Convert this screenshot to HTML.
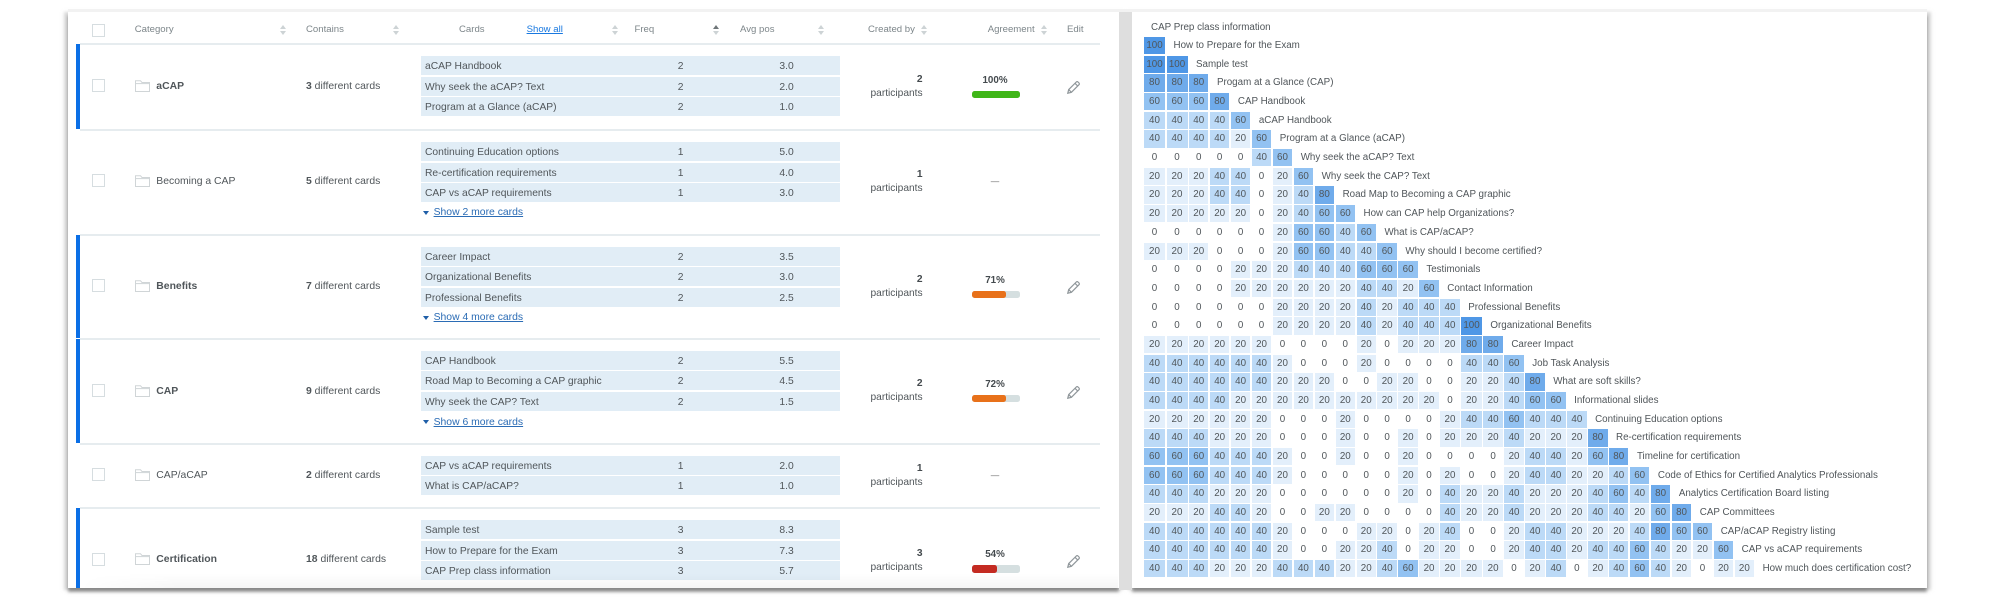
<!DOCTYPE html>
<html lang="en"><head><meta charset="utf-8"><title>Card sort results</title>
<style>
html,body{margin:0;padding:0;background:#fff}
body{width:2000px;height:600px;overflow:hidden;position:relative;font-family:"Liberation Sans",sans-serif;color:#50565a}
#w{position:absolute;left:0;top:0;width:2000px;height:600px;filter:blur(.35px)}
.p{position:absolute;top:12px;bottom:12px;background:#fff;box-shadow:0 4px 3px 0 rgba(70,70,70,.5),-3px 1px 3px 1px rgba(185,185,185,.55),3px 1px 3px 1px rgba(185,185,185,.55)}
.a{position:absolute;white-space:nowrap;line-height:16px;height:14px}
.h{font-size:9.6px;color:#7d868a;top:22px}
.cb{position:absolute;left:91.5px;width:11px;height:11px;border:1.5px solid #d6dde0;background:#fff}
.so{position:absolute;top:25px;width:6px;height:10px}
.so:before,.so:after{content:"";position:absolute;left:0;border-left:3px solid transparent;border-right:3px solid transparent}
.so:before{top:0;border-bottom:4px solid #cdd3d5}
.so:after{bottom:0;border-top:4px solid #cdd3d5}
.so.on:before{border-bottom-color:#6f7679}
.ln{position:absolute;left:80px;width:1020px;height:1.5px;background:#e6ecef}
.bl{position:absolute;left:75.5px;width:4.5px;background:#0b6fe6}
.fo{position:absolute;left:135px;width:15px;height:12px}
.nm{left:156.3px;font-size:10.4px;color:#50565a}
.ct{left:306px;font-size:10.4px}
.k{position:absolute;left:420.6px;width:419.4px;height:19px;line-height:21px;background:#e1edf6;font-size:10.3px;color:#50565a}
.k b{position:absolute;left:4.4px;font-weight:400;white-space:nowrap}
.k i{position:absolute;left:240px;width:40px;text-align:center;font-style:normal}
.k u{position:absolute;left:346px;width:40px;text-align:center;text-decoration:none}
.sh{left:433.6px;font-size:10.4px;color:#2b6cb5;text-decoration:underline}
.tr{position:absolute;left:423.2px;width:0;height:0;border-left:3px solid transparent;border-right:3px solid transparent;border-top:4px solid #1f5fa8}
.pn{left:850px;width:72.6px;text-align:right;font-size:10.2px;color:#444a4e;font-weight:700}
.pt{left:850px;width:72.6px;text-align:right;font-size:10.2px;color:#50565a}
.pc{left:965px;width:60px;text-align:center;font-size:9.8px;font-weight:700;color:#444a4e}
.ba{position:absolute;left:971.6px;width:48.2px;height:7.4px;border-radius:2.5px;background:#d5dfe0;overflow:hidden}
.ba div{height:100%;border-radius:2.5px}
.da{left:965px;width:60px;text-align:center;font-size:8.5px;color:#666}
.pe{position:absolute;left:1067px;width:13px;height:13px}
.r{position:absolute;left:1144px;height:17.4px;display:grid;grid-template-columns:21px 21px repeat(13,19.45px) 20.7px repeat(13,19.45px) 100px;column-gap:1.5px;font-size:9.8px;line-height:18.6px}
.r i{font-style:normal;text-align:center;display:block;height:17.4px;color:#50565a}
.r span{margin-left:7px;white-space:nowrap;color:#50565a;letter-spacing:0}
.b{background:#e3effb}.c{background:#bcdaf7}.d{background:#92c2f2}.e{background:#6fabeb}.f{background:#4f97e6}
</style></head>
<body>
<div id="w">
<div class="p" style="left:68px;width:1050.5px"></div>
<div class="p" style="left:1132px;width:794.7px"></div>
<div style="position:absolute;left:1118.5px;top:12px;width:13.5px;height:578px;background:#dedede"></div>
<div style="position:absolute;left:68px;top:9px;width:1859px;height:3px;background:#f2f2f2"></div>

<!-- left table header -->
<div class="cb" style="top:24px"></div>
<div class="a h" style="left:134.7px">Category</div><div class="so" style="left:280.4px"></div>
<div class="a h" style="left:306px">Contains</div><div class="so" style="left:392.5px"></div>
<div class="a h" style="left:459px">Cards</div>
<div class="a h" style="left:526.6px;color:#1878e0;text-decoration:underline">Show all</div><div class="so" style="left:611.7px"></div>
<div class="a h" style="left:634.5px">Freq</div><div class="so on" style="left:713.2px"></div>
<div class="a h" style="left:740px">Avg pos</div><div class="so" style="left:818.4px"></div>
<div class="a h" style="left:868px">Created by</div><div class="so" style="left:921.2px"></div>
<div class="a h" style="left:987.7px">Agreement</div><div class="so" style="left:1041.2px"></div>
<div class="a h" style="left:1067px">Edit</div>

<div class="ln" style="top:43px"></div>
<div class="ln" style="top:129px"></div>
<div class="ln" style="top:234px"></div>
<div class="ln" style="top:338px"></div>
<div class="ln" style="top:443px"></div>
<div class="ln" style="top:507px"></div>

<div class="bl" style="top:44px;height:85px"></div>
<div class="bl" style="top:235px;height:103px"></div>
<div class="bl" style="top:339px;height:104px"></div>
<div class="bl" style="top:508px;height:80px"></div>

<!-- row 1 -->
<div class="cb" style="top:79px"></div>
<svg class="fo" style="top:80px" viewBox="0 0 15 12" fill="none" stroke="#d0d5d7" stroke-width="1"><path d="M.5 11.5V.8h5l1.5 1.700h7.5v9z"/><path d="M.5 3.6h14"/></svg>
<div class="a nm" style="top:79px;font-weight:700">aCAP</div>
<div class="a ct" style="top:79px"><b>3</b> different cards</div>
<div class="k" style="top:56px"><b>aCAP Handbook</b><i>2</i><u>3.0</u></div>
<div class="k" style="top:76.7px"><b>Why seek the aCAP? Text</b><i>2</i><u>2.0</u></div>
<div class="k" style="top:97.4px"><b>Program at a Glance (aCAP)</b><i>2</i><u>1.0</u></div>
<div class="a pn" style="top:72px">2</div><div class="a pt" style="top:85.7px">participants</div>
<div class="a pc" style="top:73.3px">100%</div>
<div class="ba" style="top:91px"><div style="width:100%;background:#3fb618"></div></div>
<svg class="pe" style="top:81px" viewBox="0 0 13 13" fill="none" stroke="#8f969a" stroke-width="1.2"><path d="M.8 12.200l.9-3.600L9.300 1a1.200 1.200 0 0 1 1.700 0l1 1a1.200 1.200 0 0 1 0 1.700L4.400 11.300z"/><path d="M1.700 8.600l2.700 2.700M8 2.300l2.700 2.700"/></svg>

<!-- row 2 -->
<div class="cb" style="top:174px"></div>
<svg class="fo" style="top:174.5px" viewBox="0 0 15 12" fill="none" stroke="#d0d5d7" stroke-width="1"><path d="M.5 11.500V.8h5l1.500 1.700h7.500v9z"/><path d="M.5 3.600h14"/></svg>
<div class="a nm" style="top:174px">Becoming a CAP</div>
<div class="a ct" style="top:174px"><b>5</b> different cards</div>
<div class="k" style="top:142px"><b>Continuing Education options</b><i>1</i><u>5.0</u></div>
<div class="k" style="top:162.6px"><b>Re-certification requirements</b><i>1</i><u>4.0</u></div>
<div class="k" style="top:183.2px"><b>CAP vs aCAP requirements</b><i>1</i><u>3.0</u></div>
<div class="tr" style="top:211px"></div><div class="a sh" style="top:205px">Show 2 more cards</div>
<div class="a pn" style="top:167.3px">1</div><div class="a pt" style="top:181px">participants</div>
<div class="a da" style="top:173px">—</div>

<!-- row 3 -->
<div class="cb" style="top:279px"></div>
<svg class="fo" style="top:279.5px" viewBox="0 0 15 12" fill="none" stroke="#d0d5d7" stroke-width="1"><path d="M.5 11.500V.8h5l1.500 1.700h7.500v9z"/><path d="M.5 3.600h14"/></svg>
<div class="a nm" style="top:279px;font-weight:700">Benefits</div>
<div class="a ct" style="top:279px"><b>7</b> different cards</div>
<div class="k" style="top:246.5px"><b>Career Impact</b><i>2</i><u>3.5</u></div>
<div class="k" style="top:267.1px"><b>Organizational Benefits</b><i>2</i><u>3.0</u></div>
<div class="k" style="top:287.7px"><b>Professional Benefits</b><i>2</i><u>2.5</u></div>
<div class="tr" style="top:316px"></div><div class="a sh" style="top:310px">Show 4 more cards</div>
<div class="a pn" style="top:272px">2</div><div class="a pt" style="top:285.7px">participants</div>
<div class="a pc" style="top:273.3px">71%</div>
<div class="ba" style="top:291px"><div style="width:71%;background:#e8711a"></div></div>
<svg class="pe" style="top:281px" viewBox="0 0 13 13" fill="none" stroke="#8f969a" stroke-width="1.2"><path d="M.8 12.200l.9-3.600L9.300 1a1.200 1.200 0 0 1 1.700 0l1 1a1.200 1.200 0 0 1 0 1.700L4.400 11.300z"/><path d="M1.700 8.600l2.700 2.700M8 2.300l2.700 2.700"/></svg>

<!-- row 4 -->
<div class="cb" style="top:384px"></div>
<svg class="fo" style="top:384.5px" viewBox="0 0 15 12" fill="none" stroke="#d0d5d7" stroke-width="1"><path d="M.5 11.500V.8h5l1.500 1.700h7.500v9z"/><path d="M.5 3.600h14"/></svg>
<div class="a nm" style="top:384px;font-weight:700">CAP</div>
<div class="a ct" style="top:384px"><b>9</b> different cards</div>
<div class="k" style="top:350.8px"><b>CAP Handbook</b><i>2</i><u>5.5</u></div>
<div class="k" style="top:371.4px"><b>Road Map to Becoming a CAP graphic</b><i>2</i><u>4.5</u></div>
<div class="k" style="top:392px"><b>Why seek the CAP? Text</b><i>2</i><u>1.5</u></div>
<div class="tr" style="top:420px"></div><div class="a sh" style="top:414.5px">Show 6 more cards</div>
<div class="a pn" style="top:376px">2</div><div class="a pt" style="top:390px">participants</div>
<div class="a pc" style="top:377.3px">72%</div>
<div class="ba" style="top:394.7px"><div style="width:72%;background:#e8711a"></div></div>
<svg class="pe" style="top:385.5px" viewBox="0 0 13 13" fill="none" stroke="#8f969a" stroke-width="1.2"><path d="M.8 12.200l.9-3.600L9.300 1a1.200 1.200 0 0 1 1.700 0l1 1a1.200 1.200 0 0 1 0 1.700L4.400 11.300z"/><path d="M1.700 8.600l2.700 2.700M8 2.300l2.700 2.700"/></svg>

<!-- row 5 -->
<div class="cb" style="top:468px"></div>
<svg class="fo" style="top:468.5px" viewBox="0 0 15 12" fill="none" stroke="#d0d5d7" stroke-width="1"><path d="M.5 11.500V.8h5l1.500 1.700h7.500v9z"/><path d="M.5 3.600h14"/></svg>
<div class="a nm" style="top:467.5px">CAP/aCAP</div>
<div class="a ct" style="top:467.5px"><b>2</b> different cards</div>
<div class="k" style="top:455.7px"><b>CAP vs aCAP requirements</b><i>1</i><u>2.0</u></div>
<div class="k" style="top:476.3px"><b>What is CAP/aCAP?</b><i>1</i><u>1.0</u></div>
<div class="a pn" style="top:461.3px">1</div><div class="a pt" style="top:475px">participants</div>
<div class="a da" style="top:467px">—</div>

<!-- row 6 -->
<div class="cb" style="top:552.5px"></div>
<svg class="fo" style="top:552.5px" viewBox="0 0 15 12" fill="none" stroke="#d0d5d7" stroke-width="1"><path d="M.5 11.500V.8h5l1.500 1.700h7.500v9z"/><path d="M.5 3.600h14"/></svg>
<div class="a nm" style="top:552px;font-weight:700">Certification</div>
<div class="a ct" style="top:552px"><b>18</b> different cards</div>
<div class="k" style="top:520px"><b>Sample test</b><i>3</i><u>8.3</u></div>
<div class="k" style="top:540.6px"><b>How to Prepare for the Exam</b><i>3</i><u>7.3</u></div>
<div class="k" style="top:561.4px"><b>CAP Prep class information</b><i>3</i><u>5.7</u></div>
<div class="a pn" style="top:546px">3</div><div class="a pt" style="top:559.7px">participants</div>
<div class="a pc" style="top:547.3px">54%</div>
<div class="ba" style="top:565.3px"><div style="width:53%;background:#c42b22"></div></div>
<svg class="pe" style="top:554.5px" viewBox="0 0 13 13" fill="none" stroke="#8f969a" stroke-width="1.2"><path d="M.8 12.200l.9-3.600L9.300 1a1.200 1.200 0 0 1 1.700 0l1 1a1.200 1.200 0 0 1 0 1.700L4.400 11.300z"/><path d="M1.700 8.600l2.700 2.700M8 2.300l2.700 2.700"/></svg>
<div style="position:absolute;left:80px;top:574px;width:1038px;height:14px;background:linear-gradient(rgba(0,0,0,0),rgba(0,0,0,.04));-webkit-mask-image:linear-gradient(90deg,transparent,#000 100px);mask-image:linear-gradient(90deg,transparent,#000 100px)"></div>

<!-- matrix -->
<div class="a" style="left:1151px;top:20px;font-size:9.8px">CAP Prep class information</div>
<div class="r" style="top:37px"><i class="f">100</i><span>How to Prepare for the Exam</span></div>
<div class="r" style="top:55.7px"><i class="f">100</i><i class="f">100</i><span>Sample test</span></div>
<div class="r" style="top:74.4px"><i class="e">80</i><i class="e">80</i><i class="e">80</i><span>Progam at a Glance (CAP)</span></div>
<div class="r" style="top:93px"><i class="d">60</i><i class="d">60</i><i class="d">60</i><i class="e">80</i><span>CAP Handbook</span></div>
<div class="r" style="top:111.7px"><i class="c">40</i><i class="c">40</i><i class="c">40</i><i class="c">40</i><i class="d">60</i><span>aCAP Handbook</span></div>
<div class="r" style="top:130.4px"><i class="c">40</i><i class="c">40</i><i class="c">40</i><i class="c">40</i><i class="b">20</i><i class="d">60</i><span>Program at a Glance (aCAP)</span></div>
<div class="r" style="top:149px"><i>0</i><i>0</i><i>0</i><i>0</i><i>0</i><i class="c">40</i><i class="d">60</i><span>Why seek the aCAP? Text</span></div>
<div class="r" style="top:167.7px"><i class="b">20</i><i class="b">20</i><i class="b">20</i><i class="c">40</i><i class="c">40</i><i>0</i><i class="b">20</i><i class="d">60</i><span>Why seek the CAP? Text</span></div>
<div class="r" style="top:186.4px"><i class="b">20</i><i class="b">20</i><i class="b">20</i><i class="c">40</i><i class="c">40</i><i>0</i><i class="b">20</i><i class="c">40</i><i class="e">80</i><span>Road Map to Becoming a CAP graphic</span></div>
<div class="r" style="top:205.1px"><i class="b">20</i><i class="b">20</i><i class="b">20</i><i class="b">20</i><i class="b">20</i><i>0</i><i class="b">20</i><i class="c">40</i><i class="d">60</i><i class="d">60</i><span>How can CAP help Organizations?</span></div>
<div class="r" style="top:223.8px"><i>0</i><i>0</i><i>0</i><i>0</i><i>0</i><i>0</i><i class="b">20</i><i class="d">60</i><i class="d">60</i><i class="c">40</i><i class="d">60</i><span>What is CAP/aCAP?</span></div>
<div class="r" style="top:242.5px"><i class="b">20</i><i class="b">20</i><i class="b">20</i><i>0</i><i>0</i><i>0</i><i class="b">20</i><i class="d">60</i><i class="d">60</i><i class="c">40</i><i class="c">40</i><i class="d">60</i><span>Why should I become certified?</span></div>
<div class="r" style="top:261.1px"><i>0</i><i>0</i><i>0</i><i>0</i><i class="b">20</i><i class="b">20</i><i class="b">20</i><i class="c">40</i><i class="c">40</i><i class="c">40</i><i class="d">60</i><i class="d">60</i><i class="d">60</i><span>Testimonials</span></div>
<div class="r" style="top:279.8px"><i>0</i><i>0</i><i>0</i><i>0</i><i class="b">20</i><i class="b">20</i><i class="b">20</i><i class="b">20</i><i class="b">20</i><i class="b">20</i><i class="c">40</i><i class="c">40</i><i class="b">20</i><i class="d">60</i><span>Contact Information</span></div>
<div class="r" style="top:298.5px"><i>0</i><i>0</i><i>0</i><i>0</i><i>0</i><i>0</i><i class="b">20</i><i class="b">20</i><i class="b">20</i><i class="b">20</i><i class="c">40</i><i class="b">20</i><i class="c">40</i><i class="c">40</i><i class="c">40</i><span>Professional Benefits</span></div>
<div class="r" style="top:317.2px"><i>0</i><i>0</i><i>0</i><i>0</i><i>0</i><i>0</i><i class="b">20</i><i class="b">20</i><i class="b">20</i><i class="b">20</i><i class="c">40</i><i class="b">20</i><i class="c">40</i><i class="c">40</i><i class="c">40</i><i class="f">100</i><span>Organizational Benefits</span></div>
<div class="r" style="top:335.9px"><i class="b">20</i><i class="b">20</i><i class="b">20</i><i class="b">20</i><i class="b">20</i><i class="b">20</i><i>0</i><i>0</i><i>0</i><i>0</i><i class="b">20</i><i>0</i><i class="b">20</i><i class="b">20</i><i class="b">20</i><i class="e">80</i><i class="e">80</i><span>Career Impact</span></div>
<div class="r" style="top:354.6px"><i class="c">40</i><i class="c">40</i><i class="c">40</i><i class="c">40</i><i class="c">40</i><i class="c">40</i><i class="b">20</i><i>0</i><i>0</i><i>0</i><i class="b">20</i><i>0</i><i>0</i><i>0</i><i>0</i><i class="c">40</i><i class="c">40</i><i class="d">60</i><span>Job Task Analysis</span></div>
<div class="r" style="top:373.2px"><i class="c">40</i><i class="c">40</i><i class="c">40</i><i class="c">40</i><i class="c">40</i><i class="c">40</i><i class="b">20</i><i class="b">20</i><i class="b">20</i><i>0</i><i>0</i><i class="b">20</i><i class="b">20</i><i>0</i><i>0</i><i class="b">20</i><i class="b">20</i><i class="c">40</i><i class="e">80</i><span>What are soft skills?</span></div>
<div class="r" style="top:391.9px"><i class="c">40</i><i class="c">40</i><i class="c">40</i><i class="c">40</i><i class="b">20</i><i class="b">20</i><i class="b">20</i><i class="b">20</i><i class="b">20</i><i class="b">20</i><i class="b">20</i><i class="b">20</i><i class="b">20</i><i class="b">20</i><i>0</i><i class="b">20</i><i class="b">20</i><i class="c">40</i><i class="d">60</i><i class="d">60</i><span>Informational slides</span></div>
<div class="r" style="top:410.6px"><i class="b">20</i><i class="b">20</i><i class="b">20</i><i class="b">20</i><i class="b">20</i><i class="b">20</i><i>0</i><i>0</i><i>0</i><i class="b">20</i><i>0</i><i>0</i><i>0</i><i>0</i><i class="b">20</i><i class="c">40</i><i class="c">40</i><i class="d">60</i><i class="c">40</i><i class="c">40</i><i class="c">40</i><span>Continuing Education options</span></div>
<div class="r" style="top:429.3px"><i class="c">40</i><i class="c">40</i><i class="c">40</i><i class="b">20</i><i class="b">20</i><i class="b">20</i><i>0</i><i>0</i><i>0</i><i class="b">20</i><i>0</i><i>0</i><i class="b">20</i><i>0</i><i class="b">20</i><i class="b">20</i><i class="b">20</i><i class="c">40</i><i class="b">20</i><i class="b">20</i><i class="b">20</i><i class="e">80</i><span>Re-certification requirements</span></div>
<div class="r" style="top:448px"><i class="d">60</i><i class="d">60</i><i class="d">60</i><i class="c">40</i><i class="c">40</i><i class="c">40</i><i class="b">20</i><i>0</i><i>0</i><i class="b">20</i><i>0</i><i>0</i><i class="b">20</i><i>0</i><i>0</i><i>0</i><i>0</i><i class="b">20</i><i class="c">40</i><i class="c">40</i><i class="b">20</i><i class="d">60</i><i class="e">80</i><span>Timeline for certification</span></div>
<div class="r" style="top:466.7px"><i class="d">60</i><i class="d">60</i><i class="d">60</i><i class="c">40</i><i class="c">40</i><i class="c">40</i><i class="b">20</i><i>0</i><i>0</i><i>0</i><i>0</i><i>0</i><i class="b">20</i><i>0</i><i class="b">20</i><i>0</i><i>0</i><i class="b">20</i><i class="c">40</i><i class="c">40</i><i class="b">20</i><i class="b">20</i><i class="c">40</i><i class="d">60</i><span>Code of Ethics for Certified Analytics Professionals</span></div>
<div class="r" style="top:485.3px"><i class="c">40</i><i class="c">40</i><i class="c">40</i><i class="b">20</i><i class="b">20</i><i class="b">20</i><i>0</i><i>0</i><i>0</i><i>0</i><i>0</i><i>0</i><i class="b">20</i><i>0</i><i class="c">40</i><i class="b">20</i><i class="b">20</i><i class="c">40</i><i class="b">20</i><i class="b">20</i><i class="b">20</i><i class="c">40</i><i class="d">60</i><i class="c">40</i><i class="e">80</i><span>Analytics Certification Board listing</span></div>
<div class="r" style="top:504px"><i class="b">20</i><i class="b">20</i><i class="b">20</i><i class="c">40</i><i class="c">40</i><i class="b">20</i><i>0</i><i>0</i><i class="b">20</i><i class="b">20</i><i>0</i><i>0</i><i>0</i><i>0</i><i class="c">40</i><i class="b">20</i><i class="b">20</i><i class="c">40</i><i class="b">20</i><i class="b">20</i><i class="b">20</i><i class="c">40</i><i class="c">40</i><i class="b">20</i><i class="d">60</i><i class="e">80</i><span>CAP Committees</span></div>
<div class="r" style="top:522.7px"><i class="c">40</i><i class="c">40</i><i class="c">40</i><i class="c">40</i><i class="c">40</i><i class="c">40</i><i class="b">20</i><i>0</i><i>0</i><i>0</i><i class="b">20</i><i class="b">20</i><i>0</i><i class="b">20</i><i class="c">40</i><i>0</i><i>0</i><i class="b">20</i><i class="c">40</i><i class="c">40</i><i class="b">20</i><i class="b">20</i><i class="b">20</i><i class="c">40</i><i class="e">80</i><i class="d">60</i><i class="d">60</i><span>CAP/aCAP Registry listing</span></div>
<div class="r" style="top:541.4px"><i class="c">40</i><i class="c">40</i><i class="c">40</i><i class="c">40</i><i class="c">40</i><i class="c">40</i><i class="b">20</i><i>0</i><i>0</i><i class="b">20</i><i class="b">20</i><i class="c">40</i><i>0</i><i class="b">20</i><i class="b">20</i><i>0</i><i>0</i><i class="b">20</i><i class="c">40</i><i class="c">40</i><i class="b">20</i><i class="c">40</i><i class="c">40</i><i class="d">60</i><i class="c">40</i><i class="b">20</i><i class="b">20</i><i class="d">60</i><span>CAP vs aCAP requirements</span></div>
<div class="r" style="top:560.1px"><i class="c">40</i><i class="c">40</i><i class="c">40</i><i class="b">20</i><i class="b">20</i><i class="b">20</i><i class="c">40</i><i class="c">40</i><i class="c">40</i><i class="b">20</i><i class="b">20</i><i class="c">40</i><i class="d">60</i><i class="b">20</i><i class="b">20</i><i class="b">20</i><i class="b">20</i><i>0</i><i class="b">20</i><i class="c">40</i><i>0</i><i class="b">20</i><i class="c">40</i><i class="d">60</i><i class="c">40</i><i class="b">20</i><i>0</i><i class="b">20</i><i class="b">20</i><span>How much does certification cost?</span></div>
</div>
</body></html>
